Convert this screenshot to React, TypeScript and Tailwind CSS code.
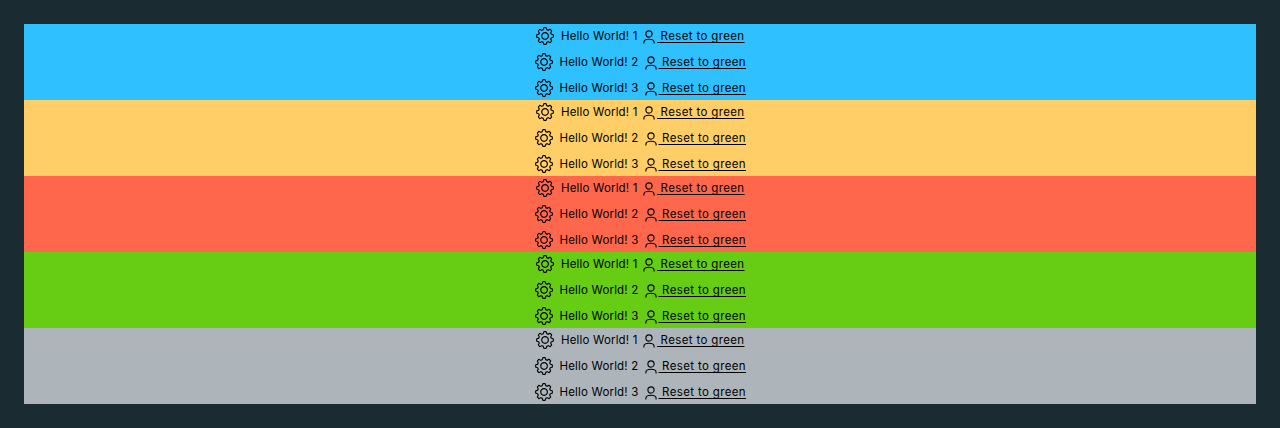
function Cog() {
  return (
    <svg viewBox="0 0 36 36" className="h-5 w-5 shrink-0" fill="currentColor">
      <path d="M18.1,11c-3.9,0-7,3.1-7,7s3.1,7,7,7c3.9,0,7-3.1,7-7S22,11,18.1,11z M18.1,23c-2.8,0-5-2.2-5-5s2.2-5,5-5c2.8,0,5,2.2,5,5S20.9,23,18.1,23z" />
      <path d="M32.8,14.7L30,13.8l-0.6-1.5l1.4-2.6c0.3-0.6,0.2-1.4-0.3-1.9l-2.4-2.4c-0.5-0.5-1.3-0.6-1.9-0.3l-2.6,1.4l-1.5-0.6l-0.9-2.8C21,2.5,20.4,2,19.7,2h-3.4c-0.7,0-1.3,0.5-1.4,1.2L14,6c-0.6,0.1-1.1,0.3-1.6,0.6L9.8,5.2C9.2,4.9,8.4,5,7.9,5.5L5.5,7.9C5,8.4,4.9,9.2,5.2,9.8l1.3,2.5c-0.2,0.5-0.4,1.1-0.6,1.6l-2.8,0.9C2.5,15,2,15.6,2,16.3v3.4c0,0.7,0.5,1.3,1.2,1.5L6,22.1l0.6,1.5l-1.4,2.6c-0.3,0.6-0.2,1.4,0.3,1.9l2.4,2.4c0.5,0.5,1.3,0.6,1.9,0.3l2.6-1.4l1.5,0.6l0.9,2.9c0.2,0.6,0.8,1.1,1.5,1.1h3.4c0.7,0,1.3-0.5,1.5-1.1l0.9-2.9l1.5-0.6l2.6,1.4c0.6,0.3,1.4,0.2,1.9-0.3l2.4-2.4c0.5-0.5,0.6-1.3,0.3-1.9l-1.4-2.6l0.6-1.5l2.9-0.9c0.6-0.2,1.1-0.8,1.1-1.5v-3.4C34,15.6,33.5,14.9,32.8,14.7z M32,19.4l-3.6,1.1L28.3,21c-0.3,0.7-0.6,1.4-0.9,2.1l-0.3,0.5l1.8,3.3l-2,2l-3.3-1.8l-0.5,0.3c-0.7,0.4-1.4,0.7-2.1,0.9l-0.5,0.1L19.4,32h-2.8l-1.1-3.6L15,28.3c-0.7-0.3-1.4-0.6-2.1-0.9l-0.5-0.3l-3.3,1.8l-2-2l1.8-3.3l-0.3-0.5c-0.4-0.7-0.7-1.4-0.9-2.1l-0.1-0.5L4,19.4v-2.8l3.4-1l0.2-0.5c0.2-0.8,0.5-1.5,0.9-2.2l0.3-0.5L7.1,9.1l2-2l3.2,1.8l0.5-0.3c0.7-0.4,1.4-0.7,2.2-0.9l0.5-0.2L16.6,4h2.8l1.1,3.5L21,7.7c0.7,0.2,1.4,0.5,2.1,0.9l0.5,0.3l3.3-1.8l2,2l-1.8,3.3l0.3,0.5c0.4,0.7,0.7,1.4,0.9,2.1l0.1,0.5l3.6,1.1V19.4z" />
    </svg>
  );
}

function User() {
  return (
    <svg viewBox="0 0 12 14" className="mt-[2px] h-[14px] w-3 shrink-0" fill="none" stroke="currentColor" strokeWidth="1.1">
      <circle cx="6" cy="4" r="3.1" />
      <path d="M0.9 13.5V12.2C0.9 10.4 3.2 9.2 6 9.2S11.1 10.4 11.1 12.2V13.5" />
    </svg>
  );
}

const bands = ["bg-[#2fc0ff]", "bg-[#ffce66]", "bg-[#ff674c]", "bg-[#66cc14]", "bg-[#adb5bb]"];

function Row({ n }: { n: number }) {
  return (
    <div className="flex h-6 items-center justify-center pr-px">
      <Cog />
      <span className={`ml-1.5 whitespace-pre tracking-[0.17px] ${n === 1 ? "w-[77px]" : "w-20"}`}>Hello World! {n}</span>
      <span className="ml-[5px] flex"><User /></span>
      <a className="ml-[2px] w-[87px] whitespace-pre tracking-[0.36px] underline decoration-1 underline-offset-2" href="#">{" Reset to green"}</a>
    </div>
  );
}

export default function App() {
  return (
    <div className="h-[428px] bg-[#1b2b32] p-6 font-['Inter',sans-serif] text-[11.5px] leading-4 text-black">
      {bands.map((color) => (
        <div key={color} className={`flex h-[76px] flex-col gap-0.5 ${color}`}>
          <Row n={1} />
          <Row n={2} />
          <Row n={3} />
        </div>
      ))}
    </div>
  );
}
